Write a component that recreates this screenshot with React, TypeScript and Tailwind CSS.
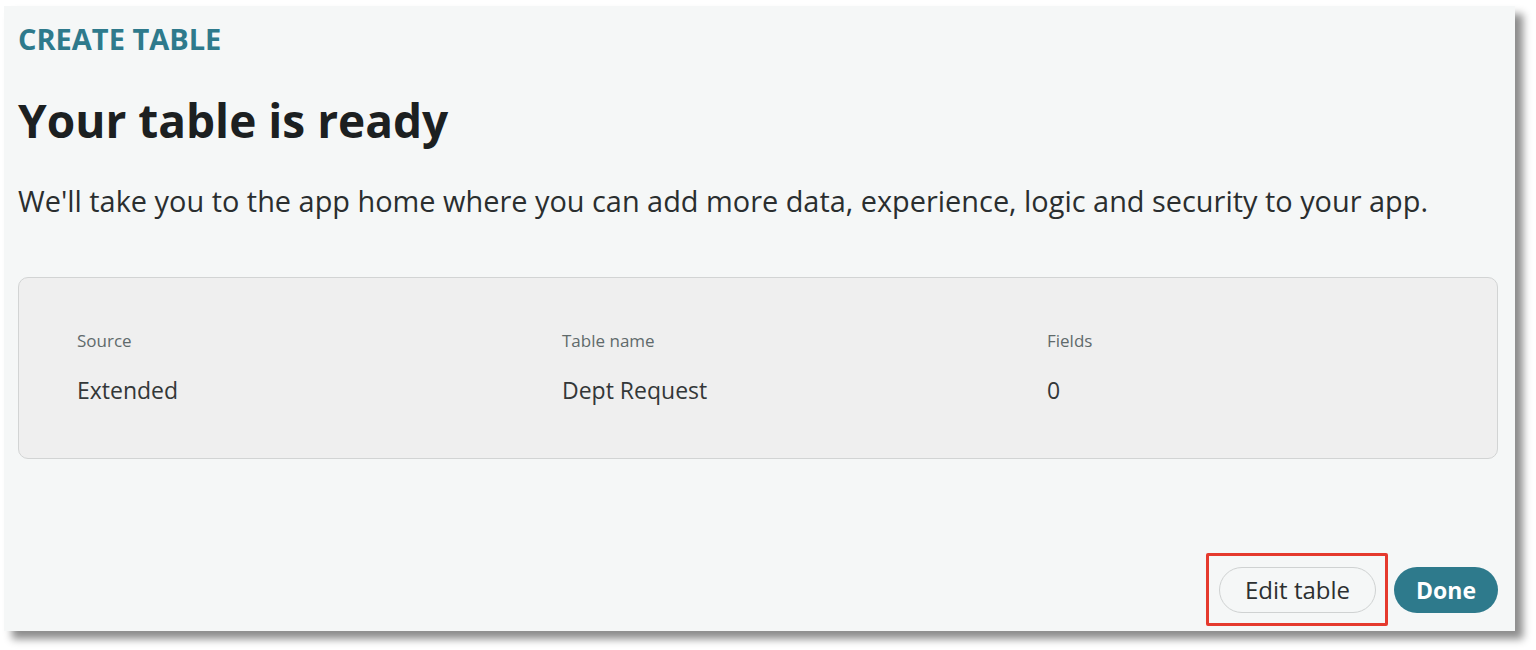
import React from 'react';

const fields = [
    { label: 'Source', value: 'Extended' },
    { label: 'Table name', value: 'Dept Request' },
    { label: 'Fields', value: '0' },
];

export default function App() {
    return (
        <div className="w-[1536px] h-[650px] bg-white overflow-hidden" style={{ fontFamily: '"Open Sans", sans-serif' }}>
            <div className="ml-[4px] mt-[6px] w-[1511px] h-[625px] bg-[#f5f7f7] shadow-[8px_8px_8px_rgba(0,0,0,0.45)] flex flex-col px-[14px] pt-[15px]">
                <div className="text-[29px] leading-[36px] font-bold text-[#2e7a8c]">CREATE TABLE</div>
                <h1 className="mt-[33px] text-[46px] leading-[60px] font-bold text-[#1c2021]">Your table is ready</h1>
                <p className="mt-[31px] text-[28.9px] leading-[40px] text-[#2a2e2f]">
                    We'll take you to the app home where you can add more data, experience, logic and security to your app.
                </p>
                <div className="mt-[56px] mr-[3px] h-[182px] rounded-[10px] border border-[#d2d4d4] bg-[#efefef] pl-[58px] pt-[51px] grid grid-cols-[485px_485px_1fr]">
                    {fields.map(f => (
                        <div key={f.label} className="flex flex-col">
                            <span className="text-[17px] leading-[24px] text-[#5f6a6b]">{f.label}</span>
                            <span className="mt-[22px] text-[23px] leading-[30px] text-[#333738]">{f.value}</span>
                        </div>
                    ))}
                </div>
                <div className="mt-auto mb-[18px] mr-[3px] flex justify-end items-center gap-[18px]">
                    <div className="relative">
                        <button className="h-[46px] px-[25px] rounded-full border border-[#cfd2d2] bg-[#f5f7f7] text-[24px] text-[#2c3031]">
                            Edit table
                        </button>
                        <div className="absolute -left-[13px] -top-[14px] -right-[12px] -bottom-[13px] border-[3px] border-[#e53a2e] rounded-[2px] pointer-events-none" />
                    </div>
                    <button className="h-[46px] px-[22px] rounded-full bg-[#2e7a8c] text-[23px] font-bold text-white">
                        Done
                    </button>
                </div>
            </div>
        </div>
    );
}
